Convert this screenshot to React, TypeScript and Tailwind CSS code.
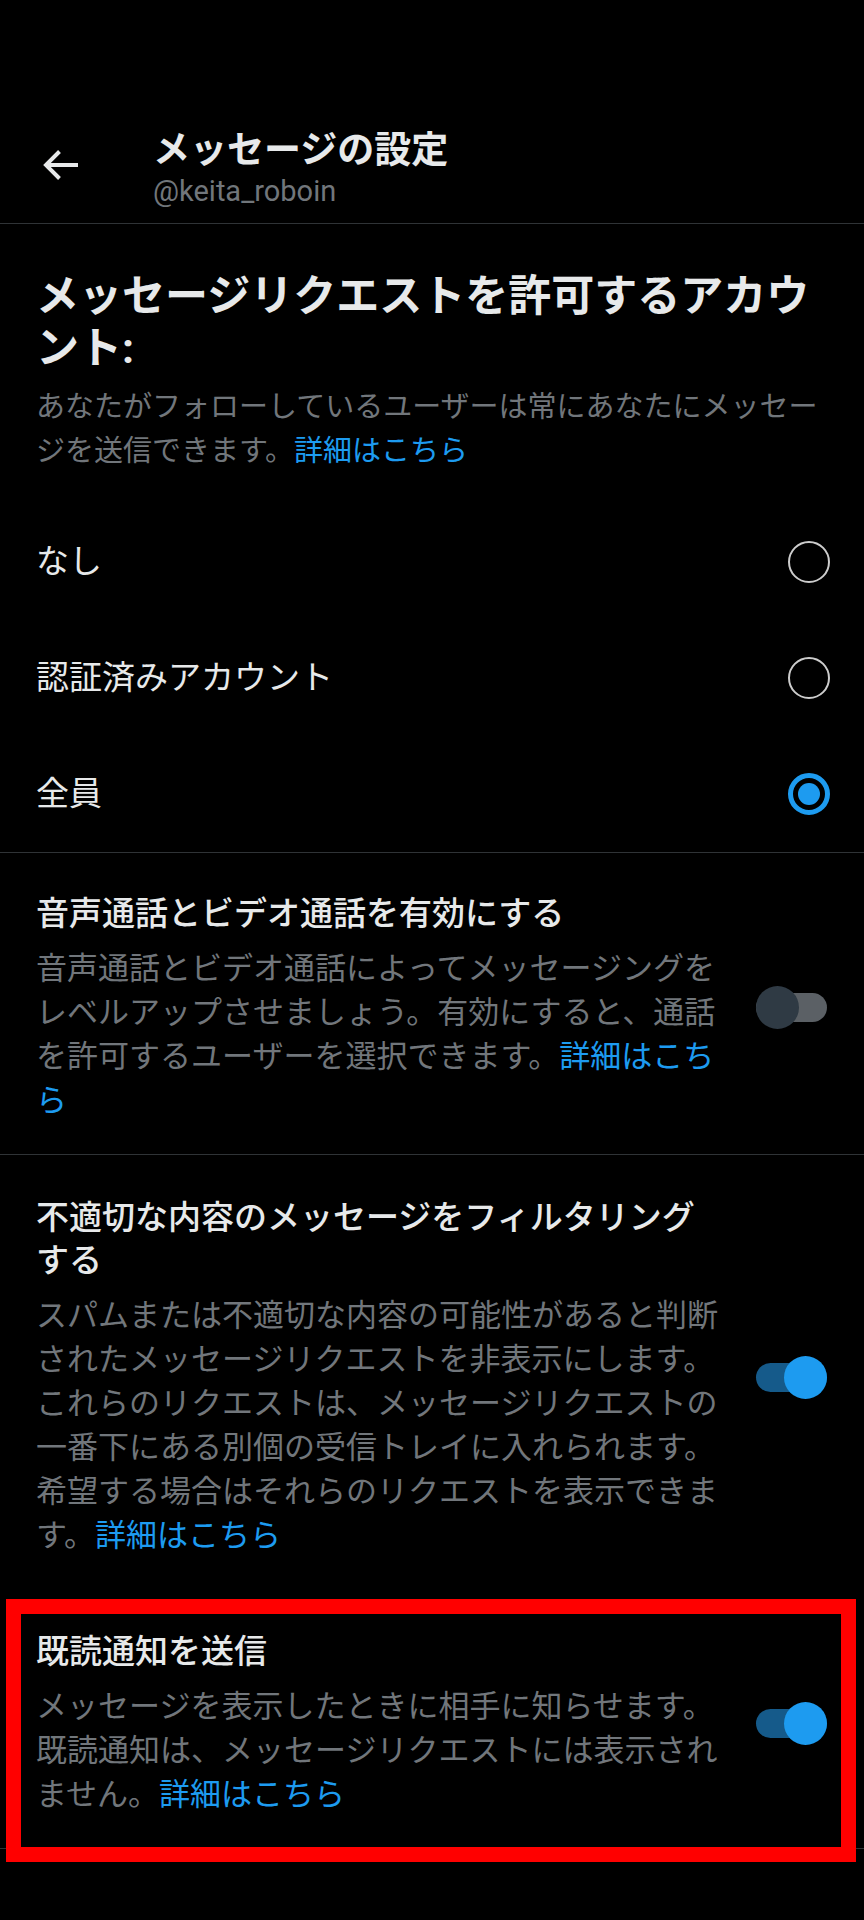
import React from "react";

const LINK = "詳細はこちら";

function Toggle({ on }: { on: boolean }) {
  return (
    <div className="relative flex h-[43px] w-[71px] shrink-0 items-center">
      <div className={on ? "h-[29px] w-full rounded-full bg-[#155a8a]" : "h-[29px] w-full rounded-full bg-[#5b6065]"} />
      <div
        className={
          on
            ? "absolute right-0 top-0 h-[43px] w-[43px] rounded-full bg-[#1d9bf0]"
            : "absolute left-0 top-0 h-[43px] w-[43px] rounded-full bg-[#2f3a44]"
        }
      />
    </div>
  );
}

function Radio({ checked }: { checked: boolean }) {
  if (checked) {
    return (
      <div className="flex h-[42px] w-[42px] shrink-0 items-center justify-center rounded-full border-[5px] border-[#1d9bf0]">
        <div className="h-[22px] w-[22px] rounded-full bg-[#1d9bf0]" />
      </div>
    );
  }
  return <div className="h-[42px] w-[42px] shrink-0 rounded-full border-2 border-[#cccccc]" />;
}

interface ToggleRowProps {
  title: string;
  body: string;
  on: boolean;
  divider?: boolean;
  top?: string;
  children?: React.ReactNode;
}

function ToggleRow({ title, body, on, divider = true, top = "pt-[41px]", children }: ToggleRowProps) {
  return (
    <div
      className={
        "relative flex items-center pl-[36px] pr-[37px] pb-[31px] " +
        top +
        (divider ? " border-t border-[#2f3336]" : "")
      }
    >
      <div className="w-[688px]">
        <div className="text-[33px] font-medium leading-[43px] text-[#e7e9ea]">{title}</div>
        <p className="mt-[12px] text-[31px] leading-[44px] text-[#71767b]">
          {body}
          <span className="text-[#1d9bf0]">{LINK}</span>
        </p>
      </div>
      <div className="ml-auto">
        <Toggle on={on} />
      </div>
      {children}
    </div>
  );
}

const OPTIONS = [
  { label: "なし", checked: false },
  { label: "認証済みアカウント", checked: false },
  { label: "全員", checked: true },
];

export default function App() {
  return (
    <div className="min-h-[1920px] w-full bg-black font-['Roboto','Noto_Sans_CJK_JP',sans-serif] text-[#e7e9ea]">
      {/* header */}
      <div className="flex items-start border-b border-[#2f3336] pl-[36px] pt-[129px] pb-[12px]">
        <svg viewBox="0 0 24 24" className="mt-[12px] h-12 w-12 shrink-0" fill="#e7e9ea">
          <path d="M7.414 13l5.043 5.04-1.414 1.42L3.586 12l7.457-7.46 1.414 1.42L7.414 11H21v2H7.414z" />
        </svg>
        <div className="ml-[69px]">
          <div className="text-[37px] font-bold leading-[44px]">メッセージの設定</div>
          <div className="-mt-[2px] text-[29px] leading-[40px] text-[#71767b]">@keita_roboin</div>
        </div>
      </div>

      {/* who can message */}
      <div className="pl-[36px] pr-[34px] pt-[46px]">
        <h1 className="text-[43px] font-bold leading-[52px]">メッセージリクエストを許可するアカウント:</h1>
        <p className="mt-[11px] text-[29px] leading-[44px] text-[#71767b]">
          あなたがフォローしているユーザーは常にあなたにメッセージを送信できます。
          <span className="text-[#1d9bf0]">{LINK}</span>
        </p>
        <div className="mt-[31px] flex flex-col">
          {OPTIONS.map((o) => (
            <div key={o.label} className="flex h-[116px] items-center justify-between">
              <span className="text-[33px] leading-[44px]">{o.label}</span>
              <Radio checked={o.checked} />
            </div>
          ))}
        </div>
      </div>

      <ToggleRow
        title="音声通話とビデオ通話を有効にする"
        body="音声通話とビデオ通話によってメッセージングをレベルアップさせましょう。有効にすると、通話を許可するユーザーを選択できます。"
        on={false}
        top="pt-[39px]"
      />
      <ToggleRow
        title="不適切な内容のメッセージをフィルタリングする"
        body="スパムまたは不適切な内容の可能性があると判断されたメッセージリクエストを非表示にします。これらのリクエストは、メッセージリクエストの一番下にある別個の受信トレイに入れられます。希望する場合はそれらのリクエストを表示できます。"
        on={true}
      />
      <div className="border-b border-[#2f3336]">
        <ToggleRow
          title="既読通知を送信"
          body="メッセージを表示したときに相手に知らせます。既読通知は、メッセージリクエストには表示されません。"
          on={true}
          divider={false}
        >
          <div className="pointer-events-none absolute left-[6px] right-[8px] top-[10px] bottom-[-14px] border-[15px] border-[#ff0000]" />
        </ToggleRow>
      </div>
    </div>
  );
}
